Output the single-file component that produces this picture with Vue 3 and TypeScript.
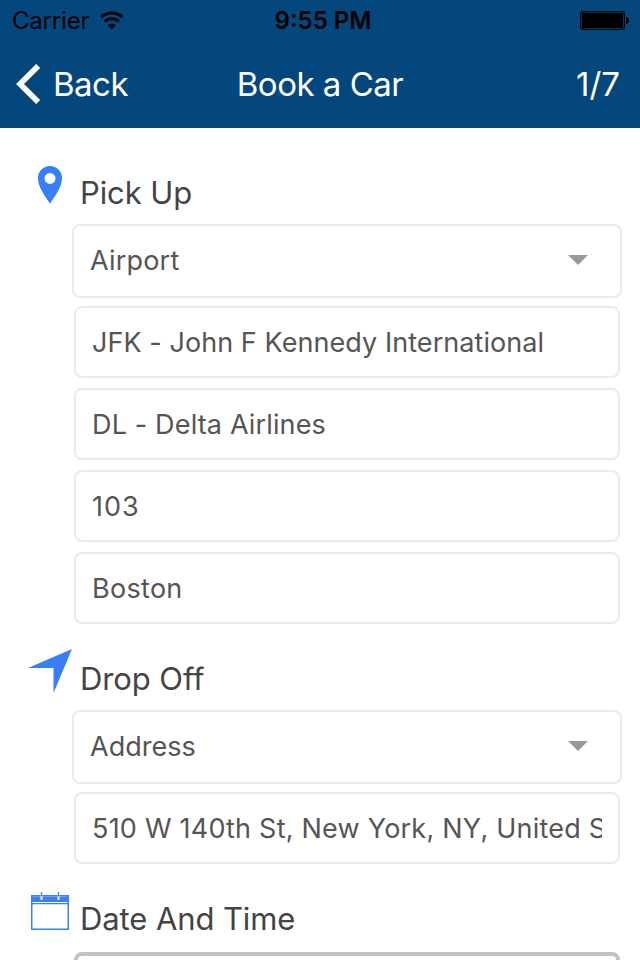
<script setup lang="ts">
interface Field {
  text: string
  kind: 'select' | 'input'
  fit: string
}
interface Section {
  id: string
  title: string
  icon: 'pin' | 'arrow' | 'calendar'
  fields: Field[]
}

const sections: Section[] = [
  {
    id: 'pickup',
    title: 'Pick Up',
    icon: 'pin',
    fields: [
      { text: 'Airport', kind: 'select', fit: 'airport' },
      { text: 'JFK - John F Kennedy International', kind: 'input', fit: 'terminal' },
      { text: 'DL - Delta Airlines', kind: 'input', fit: 'airline' },
      { text: '103', kind: 'input', fit: 'flight' },
      { text: 'Boston', kind: 'input', fit: 'city' },
    ],
  },
  {
    id: 'dropoff',
    title: 'Drop Off',
    icon: 'arrow',
    fields: [
      { text: 'Address', kind: 'select', fit: 'address' },
      { text: '510 W 140th St, New York, NY, United S', kind: 'input', fit: 'street' },
    ],
  },
  { id: 'datetime', title: 'Date And Time', icon: 'calendar', fields: [] },
]
</script>

<template>
  <div class="screen">
    <header class="header">
      <div class="status">
        <div class="carrier">
          <span class="carrier-name">Carrier</span>
          <svg class="wifi" width="26" height="19" viewBox="0 0 26 19">
            <g fill="none" stroke="#000" stroke-width="3">
              <path d="M2 6.200a16 16 0 0 1 21.600 0" />
              <path d="M5.700 10.500a10.500 10.500 0 0 1 14.200 0" />
            </g>
            <path d="M8.800 14.300a6.200 6.200 0 0 1 8 0L12.800 18.600z" />
          </svg>
        </div>
        <span class="clock">9:55 PM</span>
        <svg class="battery" width="50" height="20" viewBox="0 0 50 20">
          <rect x="0.600" y="0.600" width="43.800" height="17.800" rx="2.600" fill="none" stroke="#000" stroke-width="1.200" />
          <rect x="2" y="2" width="41" height="15" rx="1.200" />
          <path d="M46 6c2 0 3 1.600 3 3.500s-1 3.500-3 3.500z" />
        </svg>
      </div>
      <nav class="nav">
        <div class="back">
          <svg width="26" height="40" viewBox="0 0 26 40">
            <path d="M22.200 1.900L4 20l18.200 18.100" fill="none" stroke="#fff" stroke-width="5.600" />
          </svg>
          <span class="back-label">Back</span>
        </div>
        <span class="title">Book a Car</span>
        <span class="step">1/7</span>
      </nav>
    </header>

    <main>
      <section v-for="s in sections" :key="s.id" :class="['section', s.id]">
        <div class="heading">
          <div class="icon">
            <svg v-if="s.icon === 'pin'" width="24" height="38" viewBox="0 0 24 38">
              <path fill="#387ef5" fill-rule="evenodd" d="M12 0C5.300 0 0 5.300 0 11.900C0 20.500 5.500 27.500 12 37.700C18.500 27.500 24 20.500 24 11.900C24 5.300 18.700 0 12 0zM12 6.900a5.500 5.500 0 1 1 0 11a5.500 5.500 0 1 1 0-11z" />
            </svg>
            <svg v-else-if="s.icon === 'arrow'" width="44" height="44" viewBox="0 0 44 44">
              <path fill="#387ef5" d="M44 0L25.500 44V19H0z" />
            </svg>
            <svg v-else width="38" height="38" viewBox="0 0 38 38">
              <path fill="#387ef5" fill-rule="evenodd" d="M0 3H38V38H0zM1.500 12.300V36.500H36.500V12.300z" />
              <path d="M1.500 10.500H36.500" stroke="#fff" stroke-width="1" />
              <path d="M1.500 4.500H36.500" stroke="#8bb4f9" stroke-width="0.600" />
              <path d="M10.500 3.500V7.700M27.500 3.500V7.700" stroke="#fff" stroke-width="2" />
              <path d="M10.500 0V4.500M27.500 0V4.500" stroke="#387ef5" stroke-width="1.300" />
            </svg>
          </div>
          <h2>{{ s.title }}</h2>
        </div>
        <div class="fields">
          <div v-for="f in s.fields" :key="f.fit" :class="['field', f.kind]">
            <span :class="['value', f.fit]">{{ f.text }}</span>
            <svg v-if="f.kind === 'select'" class="caret" width="20" height="10" viewBox="0 0 20 10">
              <path d="M0 0H20L10 10z" fill="#999" />
            </svg>
          </div>
          <div v-if="s.id === 'datetime'" class="picker"></div>
        </div>
      </section>
    </main>
  </div>
</template>

<style>
body {
  background: #fff;
}
</style>

<style scoped>
.screen {
  width: 640px;
  height: 960px;
  overflow: hidden;
  background: #fff;
  font-family: Inter, "Liberation Sans", sans-serif;
  white-space: nowrap;
}
.header {
  height: 128px;
  background: #04477c;
}
.status {
  height: 40px;
  display: grid;
  grid-template-columns: 1fr auto 1fr;
  align-items: center;
  padding: 1px 10px 0 12px;
  font-size: 24px;
  line-height: 40px;
  color: #000;
}
.carrier {
  display: flex;
  align-items: center;
  gap: 10px;
}
.carrier-name {
  letter-spacing: -0.2px;
}
.wifi {
  margin-top: -2px;
}
.clock {
  font-weight: 600;
  padding-left: 4px;
}
.battery {
  justify-self: end;
}
.nav {
  height: 86px;
  display: grid;
  grid-template-columns: 1fr auto 1fr;
  align-items: center;
  padding: 0 20px 0 16px;
  color: #fff;
  font-size: 33px;
  font-weight: 400;
  letter-spacing: -0.5px;
}
.back {
  display: flex;
  align-items: center;
  gap: 11px;
}
.title {
  padding-left: 4px;
}
.step {
  justify-self: end;
  letter-spacing: 0;
}
.heading {
  display: flex;
  height: 86px;
}
.icon {
  width: 44px;
  margin: 25px 8px 0 28px;
  display: flex;
  justify-content: center;
  align-items: flex-start;
}
.pickup .heading {
  height: 96px;
}
.pickup .icon {
  margin-top: 38px;
}
.datetime .heading {
  height: 88px;
}
.datetime .icon {
  margin-top: 28px;
}
h2 {
  margin: 35px 0 0;
  color: #444;
  font-size: 31px;
  line-height: 40px;
  font-weight: 400;
  letter-spacing: -0.1px;
}
.pickup h2 {
  margin-top: 45px;
}
.fields {
  padding: 0 18px 0 72px;
  display: flex;
  flex-direction: column;
}
.field {
  box-sizing: border-box;
  display: flex;
  align-items: center;
  justify-content: space-between;
  border: 2px solid #ebebeb;
  border-radius: 8px;
  color: #555;
  font-size: 27px;
  font-weight: 400;
}
.select {
  height: 74px;
  padding: 0 32px 2px 16px;
}
.input {
  height: 72px;
  margin: 8px 2px 2px;
  padding: 0 16px;
}
.field:last-child {
  margin-bottom: 0;
}
.value {
  overflow: hidden;
  padding-top: 2px;
  line-height: 40px;
}
.airport {
  letter-spacing: 0.2px;
}
.terminal {
  letter-spacing: 0.06px;
}
.airline {
  letter-spacing: 0.15px;
}
.flight {
  letter-spacing: 1px;
}
.city {
  letter-spacing: 0.3px;
}
.street {
  letter-spacing: 0.22px;
}
.picker {
  height: 60px;
  margin: 0 2px;
  border: 4px solid #c3c3c3;
  border-radius: 8px;
}
</style>
